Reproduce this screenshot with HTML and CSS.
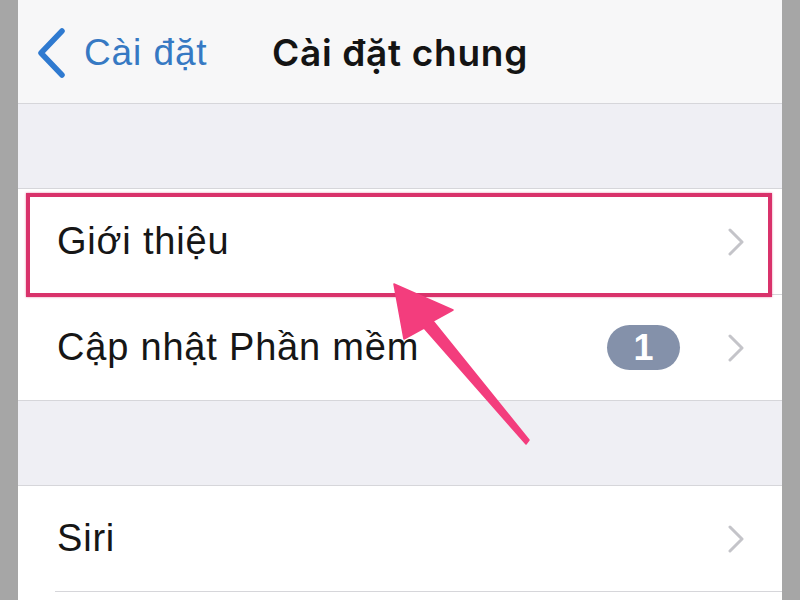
FILE: index.html
```html
<!DOCTYPE html>
<html lang="vi">
<head>
<meta charset="utf-8">
<title>Cài đặt chung</title>
<link rel="stylesheet" href="styles.css">
</head>
<body>
<div class="screen">
  <div class="side"></div>
  <main class="phone">
    <header class="nav">
      <div class="back">
        <svg class="back-chev" width="30" height="50" viewBox="0 0 30 50"><path d="M26 3 L5 25 L26 47" fill="none" stroke="#2f7ad0" stroke-width="5.5" stroke-linecap="round" stroke-linejoin="round"/></svg>
        <span class="back-label">Cài đặt</span>
      </div>
      <h1 class="title">Cài đặt chung</h1>
      <div></div>
    </header>
    <div class="gap"></div>
    <section class="group">
      <div class="row">
        <span class="label">Giới thiệu</span>
        <svg class="chev" width="18" height="28" viewBox="0 0 18 28"><path d="M3 2 L15 14 L3 26" fill="none" stroke="#c4c4c9" stroke-width="3" stroke-linecap="round" stroke-linejoin="round"/></svg>
      </div>
      <div class="row">
        <span class="label">Cập nhật Phần mềm</span>
        <span class="badge">1</span>
        <svg class="chev" width="18" height="28" viewBox="0 0 18 28"><path d="M3 2 L15 14 L3 26" fill="none" stroke="#c4c4c9" stroke-width="3" stroke-linecap="round" stroke-linejoin="round"/></svg>
      </div>
    </section>
    <div class="gap"></div>
    <section class="group open">
      <div class="row">
        <span class="label">Siri</span>
        <svg class="chev" width="18" height="28" viewBox="0 0 18 28"><path d="M3 2 L15 14 L3 26" fill="none" stroke="#c4c4c9" stroke-width="3" stroke-linecap="round" stroke-linejoin="round"/></svg>
      </div>
      <div class="row"></div>
    </section>
    <div class="highlight"></div>
  </main>
  <div class="side"></div>
  <svg class="arrow" width="800" height="600" viewBox="0 0 800 600"><polygon points="394,284 453,310 433,321 529,440 526,444 424,328 404,339" fill="#f33d7d" stroke="#f33d7d" stroke-width="1.5" stroke-linejoin="round"/></svg>
</div>
</body>
</html>
```
FILE: styles.css
```css
* { box-sizing: border-box; margin: 0; padding: 0; }
html, body { width: 800px; height: 600px; overflow: hidden; }
body { font-family: "Liberation Sans", Arial, sans-serif; background: #efeff4; }

.screen { position: relative; display: flex; width: 800px; height: 600px; }
.side { width: 18px; flex: none; background: #a6a6a6; }
.phone { position: relative; flex: 1; display: flex; flex-direction: column; background: #efeff4; overflow: hidden; }

.nav {
  height: 104px; flex: none;
  display: grid; grid-template-columns: 1fr auto 1fr; align-items: center;
  background: #f7f7f8; border-bottom: 1px solid #d6d6da;
  padding-top: 2px;
}
.back { display: flex; align-items: center; padding-left: 18px; gap: 18px; }
.back-chev { display: block; }
.back-label { font-size: 37px; color: #3679c3; letter-spacing: 0.9px; }
.title { font-family: Inter, "Liberation Sans", sans-serif; font-size: 37px; font-weight: 600; color: #141414; letter-spacing: 0.7px; }

.gap { height: 84px; flex: none; }

.group { background: #fff; border-top: 1px solid #d6d6da; border-bottom: 1px solid #d6d6da; flex: none; }
.group.open { flex: 1; border-bottom: none; }
.row { position: relative; height: 105px; display: flex; align-items: center; padding: 0 37px 0 39px; }
.row + .row { height: 106px; border-top: 1px solid #d6d6da; margin-left: 39px; padding-left: 0; }
.group.open .row + .row { margin-left: 37px; }
.label { flex: 1; font-size: 38px; color: #161616; letter-spacing: 0.8px; }
.chev { display: block; flex: none; }
.badge {
  width: 73px; height: 45px; border-radius: 23px; background: #8491aa; color: #fff;
  font-size: 36px; font-weight: 700; display: flex; align-items: center; justify-content: center;
  margin-right: 47px;
}

.highlight {
  position: absolute; left: 8px; top: 193px; width: 746px; height: 104px;
  border: 4px solid #d9326b; box-shadow: 0 0 2px rgba(217, 50, 107, 0.6);
}
.arrow { position: absolute; left: 0; top: 0; pointer-events: none; }
```
